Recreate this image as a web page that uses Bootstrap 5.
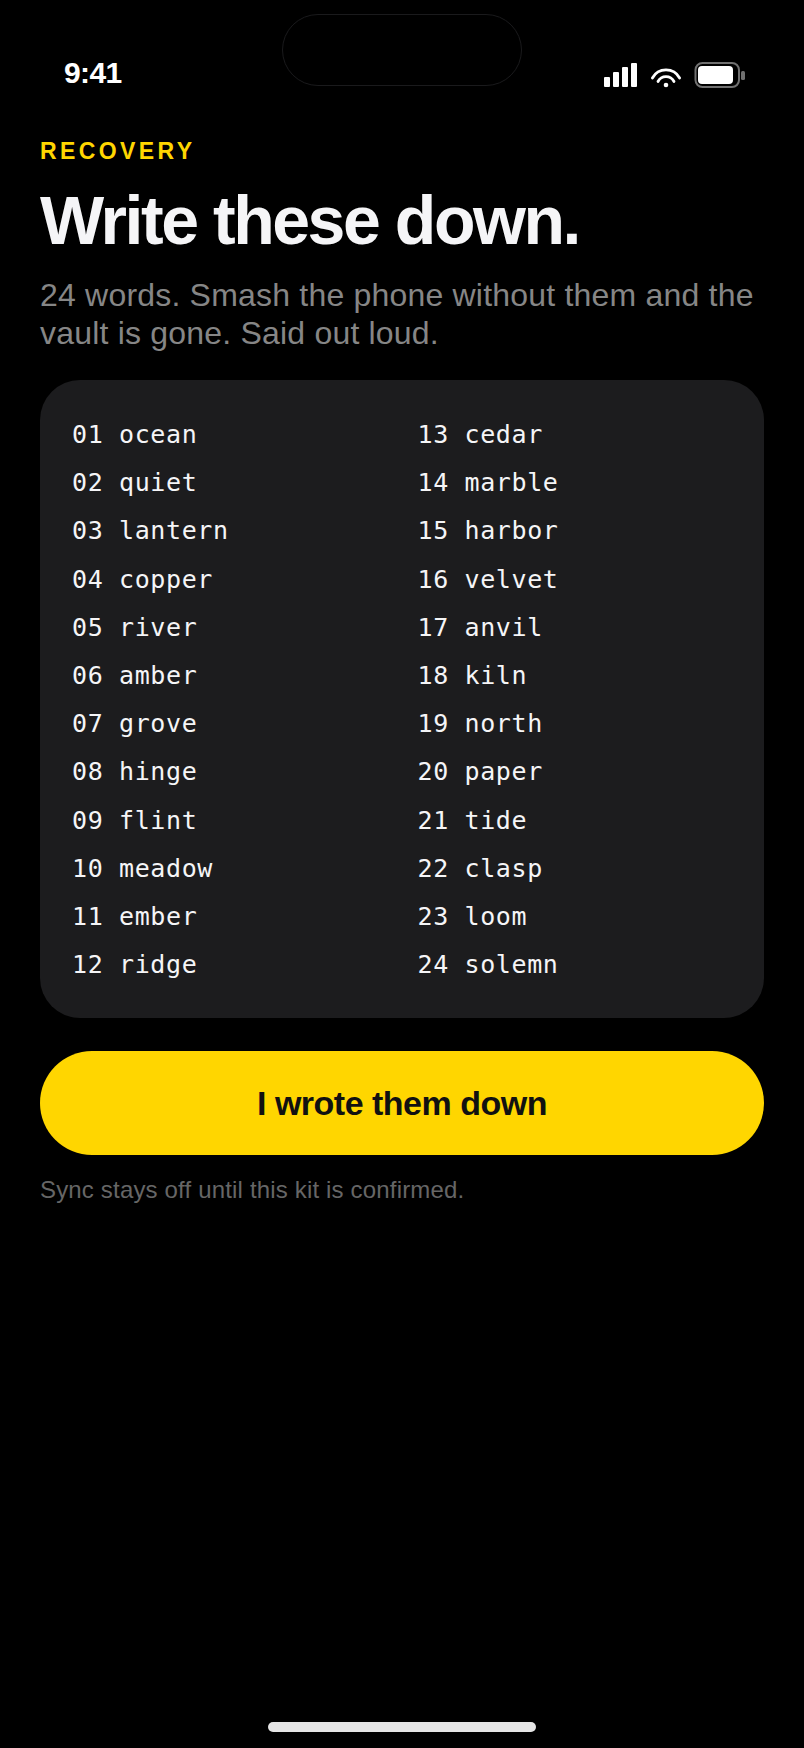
<!doctype html>
<html lang="en"><head><meta charset="utf-8">
<link href="https://cdn.jsdelivr.net/npm/bootstrap@5.3.0/dist/css/bootstrap.min.css" rel="stylesheet">
<style>
html,body{background:#000;margin:0}
.phone{width:804px;height:1748px;background:#000;position:relative;font-family:"Liberation Sans",Arial,sans-serif;overflow:hidden}
.island{position:absolute;left:282px;top:14px;width:240px;height:72px;border:1.5px solid #1a1a1c;border-radius:36px;background:#000}
.statusrow{height:120px;padding:58px 59px 0 64px}
.clock{font-size:30px;font-weight:700;color:#fff;letter-spacing:-.6px;line-height:30px}
.sicons{margin-top:4px}
.content{padding:0 40px}
.eyebrow{font-size:23px;line-height:28px;font-weight:700;letter-spacing:3.4px;color:#ffd600;margin-top:17px}
.headline{font-size:68px;font-weight:700;letter-spacing:-2.45px;line-height:72px;color:#f5f5f7;margin:19px 0 0}
.sub{font-size:32px;line-height:38px;color:#868686;letter-spacing:.2px;margin:20px 0 0}
.wordcard{background:#1c1c1e;border-radius:40px;margin-top:28px;height:638px;padding:31px 32px 0;display:flex;gap:31px}
.wordcol{flex:1 1 0;display:flex;flex-direction:column}
.wordline{font-family:"DejaVu Sans Mono",monospace;font-size:25px;letter-spacing:.62px;line-height:48.2px;color:#f5f5f7;white-space:pre}
.cta{display:block;width:100%;height:104px;margin-top:33px;background:#ffd600;border:0;border-radius:52px;color:#111;font-size:34px;font-weight:700;letter-spacing:-.5px;padding:0}
.foot{font-size:24px;line-height:30px;letter-spacing:.17px;color:#666;margin-top:20px}
.homebar{position:absolute;left:268px;top:1722px;width:268px;height:10px;border-radius:5px;background:#e5e5e5}
</style></head><body>
<div class="phone">
  <div class="island"></div>
  <div class="statusrow d-flex justify-content-between align-items-start">
    <div class="clock">9:41</div>
    <svg class="sicons" width="141" height="26" viewBox="604 62 141 26">
      <g fill="#fff"><rect x="604" y="77" width="6" height="10" rx="1"/><rect x="613" y="72" width="6" height="15" rx="1"/><rect x="622" y="67" width="6" height="20" rx="1"/><rect x="631" y="63" width="6" height="24" rx="1"/><circle cx="666" cy="85" r="2.3"/></g>
      <g fill="none" stroke="#fff" stroke-width="2.8" stroke-linecap="round"><path d="M652.4 78A15.5 15.5 0 0 1 679.6 78"/><path d="M658 81.5A9 9 0 0 1 674 81.5"/></g>
      <rect x="695.5" y="63" width="43.5" height="24" rx="7" fill="none" stroke="#707070" stroke-width="2"/>
      <rect x="698" y="66" width="35" height="18" rx="4" fill="#fff"/>
      <rect x="741" y="71" width="4" height="9" rx="1.5" fill="#707070"/>
    </svg>
  </div>
  <div class="content">
    <div class="eyebrow">RECOVERY</div>
    <h1 class="headline">Write these down.</h1>
    <p class="sub">24 words. Smash the phone without them and the vault is gone. Said out loud.</p>
    <div class="wordcard">
      <div class="wordcol" id="a"></div><div class="wordcol" id="b"></div>
    </div>
    <button class="cta btn">I wrote them down</button>
    <div class="foot">Sync stays off until this kit is confirmed.</div>
  </div>
  <div class="homebar"></div>
</div>
<script>
const w="ocean quiet lantern copper river amber grove hinge flint meadow ember ridge cedar marble harbor velvet anvil kiln north paper tide clasp loom solemn".split(" ");
w.forEach((x,i)=>{const d=document.createElement("div");d.className="wordline";d.textContent=String(i+1).padStart(2,"0")+" "+x;document.getElementById(i<12?"a":"b").appendChild(d)});
</script>
<script src="https://cdn.jsdelivr.net/npm/bootstrap@5.3.0/dist/js/bootstrap.bundle.min.js"></script>
</body></html>
